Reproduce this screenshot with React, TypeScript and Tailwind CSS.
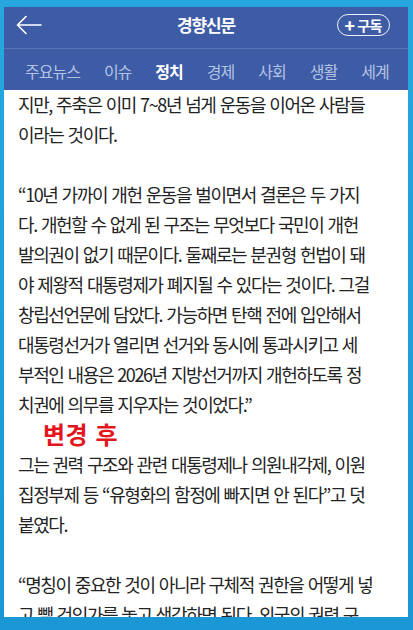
const tabs = ["주요뉴스", "이슈", "정치", "경제", "사회", "생활", "세계"];

type Line = { text: string; kind?: "blank" | "mark" };

const lines: Line[] = [
  { text: "지만, 주축은 이미 7~8년 넘게 운동을 이어온 사람들" },
  { text: "이라는 것이다." },
  { text: "", kind: "blank" },
  { text: "“10년 가까이 개헌 운동을 벌이면서 결론은 두 가지" },
  { text: "다. 개헌할 수 없게 된 구조는 무엇보다 국민이 개헌" },
  { text: "발의권이 없기 때문이다. 둘째로는 분권형 헌법이 돼" },
  { text: "야 제왕적 대통령제가 폐지될 수 있다는 것이다. 그걸" },
  { text: "창립선언문에 담았다. 가능하면 탄핵 전에 입안해서" },
  { text: "대통령선거가 열리면 선거와 동시에 통과시키고 세" },
  { text: "부적인 내용은 2026년 지방선거까지 개헌하도록 정" },
  { text: "치권에 의무를 지우자는 것이었다.”" },
  { text: "변경 후", kind: "mark" },
  { text: "그는 권력 구조와 관련 대통령제나 의원내각제, 이원" },
  { text: "집정부제 등 “유형화의 함정에 빠지면 안 된다”고 덧" },
  { text: "붙였다." },
  { text: "", kind: "blank" },
  { text: "“명칭이 중요한 것이 아니라 구체적 권한을 어떻게 넣" },
  { text: "고 뺄 것인가를 놓고 생각하면 된다. 외국의 권력 구" },
];

function BackArrow() {
  return (
    <svg width="26" height="20" viewBox="0 0 26 20" fill="none">
      <path
        d="M1.5 10H25M10 1.5L1.5 10L10 18.5"
        stroke="white"
        strokeWidth="1.6"
        strokeLinecap="round"
        strokeLinejoin="round"
      />
    </svg>
  );
}

export default function App() {
  return (
    <div
      className="w-[413px] h-[630px] bg-gradient-to-b from-[#26a8de] to-[#1a97d4] pt-[7px] pl-[4px] pr-[5px] pb-[13px]"
      style={{ fontFamily: '"Noto Sans CJK KR", "Noto Sans", sans-serif' }}
    >
      <div className="flex flex-col h-full bg-white overflow-hidden">
        <div className="bg-[#3e5ca6]">
          <div className="grid grid-cols-[1fr_auto_1fr] items-center h-[33px] mt-[1px] mb-[7px]">
            <div className="pl-[12px] flex items-center">
              <BackArrow />
            </div>
            <div className="text-white font-bold text-[17px] tracking-[-1.2px]">경향신문</div>
            <div className="flex justify-end pr-[18px]">
              <div className="flex items-center h-[22px] pl-[6px] pr-[7px] rounded-full border-[1.5px] border-white/90 text-white font-bold text-[14px] leading-none tracking-[-0.5px]">
                <span className="text-[17px] font-extrabold mr-[3px] -mt-[1px]">+</span>
                <span>구독</span>
              </div>
            </div>
          </div>
          <div className="h-px bg-[#5874b4]" />
          <div className="flex items-center gap-[24px] h-[41px] pt-[3px] pl-[21px] whitespace-nowrap text-[16px] tracking-[-1px]">
            {tabs.map((t) => (
              <span
                key={t}
                className={t === "정치" ? "text-white font-bold" : "text-[#b4c3e4]"}
              >
                {t}
              </span>
            ))}
          </div>
        </div>

        <div className="flex-1 overflow-hidden pl-[14px] text-[#232323] text-[18px] tracking-[-1.4px] [word-spacing:1.5px]">
          <div className="-mt-[1px]">
            {lines.map((l, i) =>
              l.kind === "blank" ? (
                <div key={i} className="h-[30px]" />
              ) : l.kind === "mark" ? (
                <div key={i} className="h-[30px] leading-[30px] pl-[25px] text-[24px] font-bold text-[#e4161d] tracking-[0.5px] whitespace-nowrap">
                  {l.text}
                </div>
              ) : (
                <div key={i} className="h-[30px] leading-[30px] whitespace-nowrap">
                  {l.text}
                </div>
              )
            )}
          </div>
        </div>
      </div>
    </div>
  );
}
